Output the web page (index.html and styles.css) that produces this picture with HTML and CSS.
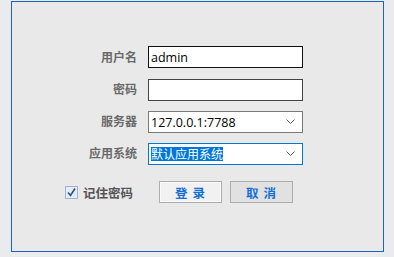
FILE: index.html
```html
<!DOCTYPE html>
<html>
	<head>
		<meta charset="utf-8">
		<link rel="stylesheet" href="styles.css">
	</head>
	<body>
		<div class="frame">
			<div class="form">
				<label class="label">用户名</label>
				<div class="field field-active">admin</div>

				<label class="label">密码</label>
				<div class="field field-pass"></div>

				<label class="label">服务器</label>
				<div class="field field-select">
					<span>127.0.0.1:7788</span>
					<svg class="chev" width="9" height="6" viewBox="0 0 9 6"><path d="M0.5 0.5 L4.5 4.5 L8.5 0.5" fill="none" stroke="#555" stroke-width="1"/></svg>
				</div>

				<label class="label">应用系统</label>
				<div class="field field-select field-focus">
					<span class="selected">默认应用系统</span>
					<svg class="chev" width="9" height="6" viewBox="0 0 9 6"><path d="M0.5 0.5 L4.5 4.5 L8.5 0.5" fill="none" stroke="#555" stroke-width="1"/></svg>
				</div>
			</div>

			<div class="actions">
				<label class="remember">
					<span class="check">
						<svg width="11" height="11" viewBox="0 0 11 11"><path d="M2 5.5 L4.5 8.5 L9 1.5" fill="none" stroke="#2b4f8a" stroke-width="1.6"/></svg>
					</span>
					记住密码
				</label>
				<button class="btn btn-login">登 录</button>
				<button class="btn btn-cancel">取 消</button>
			</div>
		</div>
	</body>
</html>
```

FILE: styles.css
```css
body {
	margin: 0;
	background-color: #eaebef;
	font-family: "Noto Sans", "Noto Sans CJK SC", sans-serif;
}

.frame {
	box-sizing: border-box;
	width: 373px;
	height: 251px;
	margin: 1px 0 0 11px;
	border: 1px solid #1a62c4;
	background-color: #e9e9e9;
	padding-top: 44px;
}

.form {
	display: grid;
	grid-template-columns: 125px 155px;
	grid-auto-rows: 22px;
	column-gap: 11px;
	row-gap: 10px;
}

.label {
	text-align: right;
	font-family: "Noto Sans CJK SC", sans-serif;
	font-weight: bold;
	font-size: 12px;
	color: #6a6a6a;
	line-height: 22px;
}

.field {
	box-sizing: border-box;
	height: 22px;
	background-color: #fff;
	border: 1px solid #7a7a7a;
	padding-left: 2px;
	font-family: "Open Sans", "Noto Sans CJK SC", sans-serif;
	font-size: 12.5px;
	line-height: 19px;
	color: #000;
	display: flex;
	align-items: center;
}

.field-active {
	border: 1.5px solid #111;
	margin-bottom: -1px;
}

.form .field-pass {
	border-color: #444;
	margin-top: 1px;
}

.field-select {
	justify-content: space-between;
	padding-right: 7px;
}
.form .field-select {
	margin-top: 1px;
}

.field-focus {
	border-color: #0078d7;
}

.selected {
	background-color: #0078d7;
	color: #fff;
	font-family: "Noto Sans CJK SC", sans-serif;
	font-size: 12px;
	line-height: 14px;
}

.chev {
	display: block;
}

.actions {
	display: flex;
	align-items: center;
	margin-top: 17px;
	padding-left: 53px;
}

.remember {
	display: flex;
	align-items: center;
	font-family: "Noto Sans CJK SC", sans-serif;
	font-weight: bold;
	font-size: 12.5px;
	color: #555;
	width: 94px;
}

.check {
	box-sizing: border-box;
	width: 13px;
	height: 13px;
	border: 1px solid #9fb3d3;
	background-color: #e6ecf6;
	margin-right: 5px;
	display: flex;
	align-items: center;
	justify-content: center;
}

.btn {
	box-sizing: border-box;
	width: 63px;
	height: 22px;
	border: 1px solid #adadad;
	font-family: "Noto Sans CJK SC", sans-serif;
	font-weight: bold;
	font-size: 12.5px;
	color: #1770d6;
	padding: 0;
	letter-spacing: 1px;
}
.btn-login {
	background-color: #f1f1f1;
	box-shadow: inset 0 0 0 1px #fafafa;
	margin-right: 8px;
}
.btn-cancel {
	background-color: #e1e1e1;
}
```
